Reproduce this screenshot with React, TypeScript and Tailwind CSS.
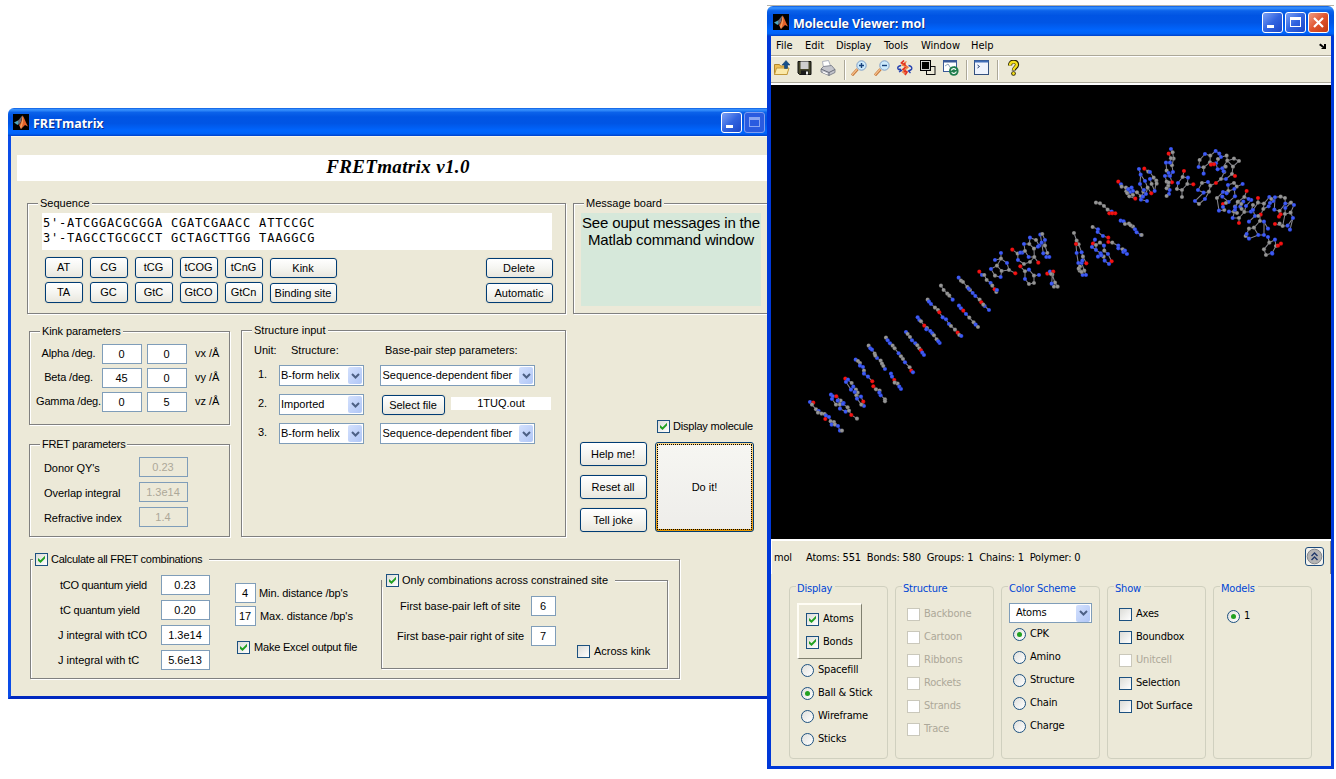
import React, { type ReactNode } from 'react';

type Kids = { children?: ReactNode; className?: string };

/* ---------- small XP widgets ---------- */

function Text({ children, className = '' }: Kids) {
  return <div className={`h-[14px] shrink-0 whitespace-nowrap leading-[14px] ${className}`}>{children}</div>;
}

function Button({ children, className = '' }: Kids) {
  return (
    <button
      className={`flex shrink-0 items-center justify-center whitespace-nowrap rounded-[3px] border border-[#003c74] bg-linear-to-b from-white via-[#f5f5f1] to-[#e9e7de] pr-px shadow-[0_0_0_1px_#e4e0cf] ${className}`}
    >
      {children}
    </button>
  );
}

function Field({ children, className = '' }: Kids) {
  return (
    <div className={`flex h-[20px] shrink-0 items-center justify-center border border-[#7f9db9] pr-px ${className}`}>{children}</div>
  );
}

function Select({ children, className = '' }: Kids) {
  return (
    <div className={`flex shrink-0 items-center justify-between border border-[#7f9db9] bg-white pr-px ${className}`}>
      <span className="whitespace-nowrap">{children}</span>
      <span className="flex h-[17px] w-[14px] items-center justify-center rounded-[2px] bg-linear-to-br from-[#d4e1fd] to-[#b0c6f6]">
        <svg width="9" height="6" viewBox="0 0 9 6">
          <path d="M1 1l3.5 3.5L8 1" fill="none" stroke="#4d6185" strokeWidth="2" />
        </svg>
      </span>
    </div>
  );
}

function Check({ on, off, className = '' }: { on?: boolean; off?: boolean; className?: string }) {
  return (
    <span
      className={`flex h-[13px] w-[13px] shrink-0 items-center justify-center border ${
        off ? 'border-[#cac8bb] bg-white' : 'border-[#1c5180] bg-linear-to-br from-[#dcdcd7] to-white'
      } ${className}`}
    >
      {on && (
        <svg width="9" height="9" viewBox="0 0 9 9">
          <path d="M1 3v2.800l2.500 2.300 4.500-4.500V.8L3.500 5.200z" fill="#21a121" />
        </svg>
      )}
    </span>
  );
}

function Radio({ on }: { on?: boolean }) {
  return (
    <span className="flex h-[13px] w-[13px] shrink-0 items-center justify-center rounded-full border border-[#1c5180] bg-linear-to-br from-[#e0e0dc] to-white">
      {on && <span className="h-[5px] w-[5px] rounded-full bg-[#21a121]" />}
    </span>
  );
}

function Panel({ title, className = '', children }: Kids & { title: ReactNode }) {
  return (
    <section className={`shrink-0 border border-[#808080] shadow-[1px_1px_0_#fff,inset_1px_1px_0_#fff] ${className}`}>
      <div className="-mt-[7px] flex h-[13px] w-fit items-center whitespace-nowrap bg-[#ece9d8] leading-[13px]">{title}</div>
      {children}
    </section>
  );
}

function MatlabLogo() {
  return (
    <svg width="16" height="16" viewBox="0 0 16 16" className="shrink-0">
      <rect width="16" height="16" fill="#000" />
      <path d="M1 8.500l4-2 2 1.500-2.500 3z" fill="#4fa6bd" />
      <path d="M5 6.500C7 5 8 2.500 9.500 1.500L8 8l-2.500 3z" fill="#6b6a78" />
      <path d="M9.500 1.500C11 3 13 9 15 12.500l-3-1.500L8 15 6 11c2-1.500 3-5 3.500-9.500z" fill="#e4622a" />
      <path d="M9.500 1.500c1 3 1 7-1.500 13.500L7 12.500C9 9 9.300 5 9.500 1.500z" fill="#f0a060" />
    </svg>
  );
}

function CaptionButton({ kind, dim }: { kind: 'min' | 'max' | 'close'; dim?: boolean }) {
  const tone =
    kind === 'close'
      ? 'border-white bg-linear-to-br from-[#ee9a80] via-[#e0532c] to-[#c23a10]'
      : dim
        ? 'border-[#7f9df0] bg-[#2a5be0]'
        : 'border-white bg-linear-to-br from-[#7da0f4] via-[#3264e0] to-[#1c46c8]';
  const glyph = dim ? '#8aa6f2' : '#fff';
  return (
    <span className={`h-[21px] w-[21px] shrink-0 rounded-[3px] border ${tone}`}>
      <svg width="19" height="19" viewBox="0 0 19 19">
        {kind === 'min' && <rect x="4" y="12" width="7" height="3" fill="#fff" />}
        {kind === 'max' && (
          <>
            <rect x="4.500" y="4.500" width="10" height="9" fill="none" stroke={glyph} />
            <rect x="4" y="4" width="11" height="3" fill={glyph} />
          </>
        )}
        {kind === 'close' && <path d="M5 5l9 9M14 5l-9 9" stroke="#fff" strokeWidth="2.200" />}
      </svg>
    </span>
  );
}

function TitleBar({ title, className = '', children }: Kids & { title: string }) {
  return (
    <header
      className={`flex shrink-0 rounded-t-[6px] bg-[linear-gradient(#0a5be0_0%,#3a94ff_6%,#0b62ea_16%,#0054e3_32%,#0055e5_55%,#0066ff_82%,#0062f6_92%,#0040c8_100%)] ${className}`}
    >
      <MatlabLogo />
      <h1 className="ml-[4px] mt-px flex-1 whitespace-nowrap font-['Open_Sans',sans-serif] text-[12.500px] font-bold leading-[17px] tracking-[-0.080px] text-white [text-shadow:1px_1px_0_#0a2f8a]">
        {title}
      </h1>
      {children}
    </header>
  );
}

/* ---------- FRETmatrix window ---------- */

const pairButtons = ['AT', 'CG', 'tCG', 'tCOG', 'tCnG', 'TA', 'GC', 'GtC', 'GtCO', 'GtCn'];

function SequencePanel() {
  return (
    <Panel title={<span className="px-[2px]">Sequence</span>} className="h-[111px] w-[539px] pl-[10px]">
      <pre className="mt-[3px] h-[37px] w-[510px] ml-[4px] bg-white pl-px pt-[3px] font-['DejaVu_Sans_Mono',monospace] text-[12px] leading-[15px] tracking-[0.780px]">
        {"5'-ATCGGACGCGGA CGATCGAACC ATTCCGC\n3'-TAGCCTGCGCCT GCTAGCTTGG TAAGGCG"}
      </pre>
      <div className="mt-[7px] ml-[7px] flex">
        <div className="grid grid-cols-[repeat(5,38px)] gap-x-[7px] gap-y-[4px]">
          {pairButtons.map((b) => (
            <Button key={b} className="h-[21px]">{b}</Button>
          ))}
        </div>
        <div className="ml-[7px] mt-px flex flex-col gap-[5px]">
          <Button className="h-[20px] w-[67px]">Kink</Button>
          <Button className="h-[20px] w-[67px]">Binding site</Button>
        </div>
        <div className="ml-[149px] mt-px flex flex-col gap-[5px]">
          <Button className="h-[20px] w-[67px]">Delete</Button>
          <Button className="h-[20px] w-[67px]">Automatic</Button>
        </div>
      </div>
    </Panel>
  );
}

function KinkPanel() {
  const rows = [
    ['Alpha /deg.', '0', '0', 'vx /Å'],
    ['Beta /deg.', '45', '0', 'vy /Å'],
    ['Gamma /deg.', '0', '5', 'vz /Å'],
  ];
  return (
    <Panel title={<span className="px-[2px] tracking-[-0.100px]">Kink parameters</span>} className="h-[94px] w-[201px] pl-[10px]">
      <div className="-ml-[6px] mt-[6px] flex flex-col gap-[4px]">
        {rows.map(([label, a, b, unit]) => (
          <div key={label} className="flex h-[20px]">
            <Text className="mt-[2px] w-[68px] pl-px text-center tracking-[-0.150px]">{label}</Text>
            <Field className="w-[40px] bg-white">{a}</Field>
            <Field className="ml-[5px] w-[40px] bg-white">{b}</Field>
            <Text className="ml-[8px] mt-[2px]">{unit}</Text>
          </div>
        ))}
      </div>
    </Panel>
  );
}

function FretPanel() {
  const rows = [
    ["Donor QY's", '0.23'],
    ['Overlap integral', '1.3e14'],
    ['Refractive index', '1.4'],
  ];
  return (
    <Panel
      title={<span className="px-[2px] tracking-[-0.250px]">FRET parameters</span>}
      className="mt-[19px] h-[93px] w-[201px] pl-[10px]"
    >
      <div className="mt-[6px] flex flex-col gap-[5px]">
        {rows.map(([label, value]) => (
          <div key={label} className="flex h-[20px]">
            <Text className="ml-[4px] mt-[4px] w-[95px] tracking-[-0.080px]">{label}</Text>
            <Field className="w-[49px] text-[#aca899]">{value}</Field>
          </div>
        ))}
      </div>
    </Panel>
  );
}

function StructurePanel() {
  return (
    <Panel title={<span className="px-[2px]">Structure input</span>} className="h-[207px] w-[325px] pl-[10px]">
      <div className="ml-[2px] mt-[6px] flex">
        <Text className="w-[37px]">Unit:</Text>
        <Text className="w-[94px]">Structure:</Text>
        <Text>Base-pair step parameters:</Text>
      </div>
      <div className="ml-[6px] mt-[8px] flex flex-col gap-[8px]">
        <div className="flex h-[21px]">
          <Text className="mt-[2px] w-[21px]">1.</Text>
          <Select className="w-[85px] pl-px">B-form helix</Select>
          <Select className="ml-[16px] w-[155px] pl-[1.500px]">Sequence-dependent fiber</Select>
        </div>
        <div className="flex h-[21px]">
          <Text className="mt-[2px] w-[21px]">2.</Text>
          <Select className="w-[85px] pl-px">Imported</Select>
          <Button className="ml-[18px] mt-px h-[20px] w-[63px]">Select file</Button>
          <div className="ml-[6px] mt-[3px] h-[13px] w-[100px] bg-white text-center leading-[13px]">1TUQ.out</div>
        </div>
        <div className="flex h-[21px]">
          <Text className="mt-[2px] w-[21px]">3.</Text>
          <Select className="w-[85px] pl-px">B-form helix</Select>
          <Select className="ml-[16px] w-[155px] pl-[1.500px]">Sequence-dependent fiber</Select>
        </div>
      </div>
    </Panel>
  );
}

function Actions() {
  return (
    <div className="ml-[14px] mt-[90px] flex flex-col">
      <div className="ml-[77px] flex h-[13px]">
        <Check on />
        <Text className="-mt-px ml-[3px] tracking-[-0.200px]">Display molecule</Text>
      </div>
      <div className="mt-[9px] flex gap-[8px]">
        <div className="flex flex-col gap-[9px]">
          <Button className="h-[24px] w-[67px]">Help me!</Button>
          <Button className="h-[24px] w-[67px]">Reset all</Button>
          <Button className="h-[24px] w-[67px]">Tell joke</Button>
        </div>
        <button className="h-[90px] w-[99px] rounded-[3px] border border-[#003c74] bg-linear-to-b from-[#ffd98a] to-[#e59700] p-px">
          <span className="flex h-full w-full items-center justify-center border border-dotted border-black bg-linear-to-b from-[#f6f6f2] to-[#eeedea] bg-clip-padding">
            Do it!
          </span>
        </button>
      </div>
    </div>
  );
}

function CombinationsPanel() {
  return (
    <Panel
      title={
        <span className="flex items-center pl-[2px] pr-[7px]">
          <Check on />
          <span className="ml-[3px] tracking-[-0.260px]">Calculate all FRET combinations</span>
        </span>
      }
      className="ml-[19px] mt-[22px] h-[120px] w-[650px] pl-[2px]"
    >
      <div className="flex">
        <div className="ml-[25px] mt-[12px] w-[103px]">
          <Text className="ml-[2px] tracking-[-0.250px]">tCO quantum yield</Text>
          <Text className="ml-[2px] mt-[11px] tracking-[-0.180px]">tC quantum yield</Text>
          <Text className="mt-[11px] tracking-[-0.050px]">J integral with tCO</Text>
          <Text className="mt-[11px]">J integral with tC</Text>
        </div>
        <div className="mt-[9px] flex flex-col gap-[5px]">
          {['0.23', '0.20', '1.3e14', '5.6e13'].map((v) => (
            <Field key={v} className="w-[49px] bg-white">{v}</Field>
          ))}
        </div>
        <div className="ml-[25px] mt-[17px] w-[146px]">
          <div className="flex">
            <Field className="w-[21px] bg-white">4</Field>
            <Text className="ml-[3px] mt-[3px] tracking-[-0.100px]">Min. distance /bp's</Text>
          </div>
          <div className="mt-[3px] flex">
            <Field className="w-[21px] bg-white">17</Field>
            <Text className="ml-[4px] mt-[3px] tracking-[-0.050px]">Max. distance /bp's</Text>
          </div>
          <div className="ml-[2px] mt-[15px] flex h-[13px]">
            <Check on />
            <Text className="-mt-px ml-[4px] tracking-[-0.200px]">Make Excel output file</Text>
          </div>
        </div>
        <Panel
          title={
            <span className="flex items-center pl-[4px] pr-[7px]">
              <Check on />
              <span className="ml-[3px]">Only combinations across constrained site</span>
            </span>
          }
          className="mt-[14px] h-[89px] w-[287px]"
        >
          <div className="ml-[14px] mt-[9px] flex">
            <Text className="ml-[4px] mt-[3px] w-[131px]">First base-pair left of site</Text>
            <Field className="w-[25px] bg-white">6</Field>
          </div>
          <div className="ml-[14px] mt-[10px] flex">
            <Text className="ml-px mt-[3px] w-[134px]">First base-pair right of site</Text>
            <Field className="w-[25px] bg-white">7</Field>
          </div>
          <div className="-mt-px ml-[195px] flex h-[13px]">
            <Check />
            <Text className="-mt-px ml-[4px]">Across kink</Text>
          </div>
        </Panel>
      </div>
    </Panel>
  );
}

function FretWindow() {
  return (
    <main className="mt-[108px] flex h-[591px] w-[759px] shrink-0 flex-col overflow-hidden">
      <TitleBar title="FRETmatrix" className="h-[28px] rounded-tr-none pl-[5px] pr-[2px] pt-[6px]">
        <span className="-mt-[2px] flex gap-[2px]">
          <CaptionButton kind="min" />
          <CaptionButton kind="max" dim />
        </span>
      </TitleBar>
      <div className="flex-1 overflow-hidden border-b-[3px] border-l-[3px] border-b-[#0028c0] border-l-[#0a4ce8] bg-[#ece9d8] font-['Liberation_Sans',Arial,sans-serif] text-[11px] text-black shadow-[inset_0_1px_0_#f8f6ea]">
        <h2 className="ml-[6px] mt-[19px] h-[26px] bg-white pl-[12px] text-center font-['Liberation_Serif',serif] text-[19px] font-bold italic leading-[24px] tracking-[0.350px]">
          FRETmatrix v1.0
        </h2>
        <div className="ml-[16px] mt-[22px] flex">
          <SequencePanel />
          <Panel title={<span className="px-[2px]">Message board</span>} className="ml-[7px] h-[111px] w-[260px] pl-[10px]">
            <p className="-ml-[3px] mt-[3px] h-[93px] w-[180px] bg-[#d6e8da] pt-px text-center text-[15px] leading-[17px]">
              <span className="whitespace-nowrap tracking-[-0.150px]">See ouput messages in the</span>
              <br />
              <span className="whitespace-nowrap tracking-[-0.150px]">Matlab command window</span>
            </p>
          </Panel>
        </div>
        <div className="ml-[18px] mt-[16px] flex">
          <div className="mt-px flex flex-col">
            <KinkPanel />
            <FretPanel />
          </div>
          <div className="w-[11px]" />
          <StructurePanel />
          <Actions />
        </div>
        <CombinationsPanel />
      </div>
    </main>
  );
}

/* ---------- Molecule Viewer window ---------- */

const tail = `60,516b 70,518r 66,524g 78,538g 86,543b 84,548g 95,551g 104,552g 108,557b 106,567r;108,557 117,561b 122,574g 132,576g 125,584b 135,584g 144,588b 150,602b 156,602g
;123,494b 129,499b 139,499r 152,512g 161,519b 150,524g 138,524g 126,507b;143,512b 150,524 150,536b 167,545b 177,542g 173,532g 159,522b 143,512;177,542 184,555r 201,566g
;166,446r 174,449b 185,459g 190,470b 183,479b 168,456b;190,470 198,479g 203,488g 199,496g 194,486b;199,496 213,500b 220,515r 222,528b 214,524g 201,506b
;197,389b 204,393g 210,399g 210,407b 219,411b 222,422g 222,431b 234,440b 247,454r;250,469r 258,478g 269,482g 272,496b 285,508g 285,514g;268,488b
;236,347g 241,355b 246,359b 254,371g 261,384b 272,392g 276,401g 285,417b;256,377g;280,408g
;303,431b 306,440b 313,450r 323,461g 333,477b;314,458g;328,470b
;288,323g 293,331b 300,340b 308,347g 314,355g 326,370b 333,379g 339,387g 345,397b 359,412g 364,422r 369,427b
;348,306b 353,312g 360,321g 366,331b 376,340b 382,346g 388,355g 393,361r 397,368b 402,375b
;383,262b 388,270b 393,274g 403,287r 411,294g 421,303b 427,310b 432,316g 440,328g 449,339b;409,298b;445,334b
;413,209g 417,215b 423,222b 435,233g 444,240g 448,247r 458,262b 468,268b 477,282b 483,288g 495,299g 503,308r 508,315g 514,318b
;453,167g 461,180g 472,191g 478,197g 488,209b
;507,227b 513,235b 520,242r 528,252b 538,263g 551,277g 557,284b 564,291g
;506,143b 513,152g 519,156g 532,171g 540,180g 548,189b 556,198b 569,209g 574,217r 584,228b 597,240b;536,176b;580,224g
;568,125r 576,135b 583,135g 590,150g 602,159b 607,167g 614,178r 619,186g;621,180b
;633,69b 633,86g 651,99b 657,120g 676,130r;657,120 635,123g 632,141b 615,137g 603,117b 621,107g 633,86 615,90b;621,107 635,123
;667,59r 683,71g 697,68b 705,63g 702,42b 718,42g 720,23b 738,30g 748,47b 732,56g 718,42;732,56 733,81g 745,98r;733,81 720,96g 702,102g 684,90b 683,71;716,81b 705,63;716,81 733,81;691,68b
;751,14b 757,12g 765,30b 765,47g 755,38b 744,50b;751,14 755,38 760,70b 772,69g 765,47;769,81b 778,81b
;691,109r 705,124g 717,119b 732,137g 747,135b;732,137 732,159g 717,162g 705,147b 705,124
;772,131r 780,125b 790,125r 787,134g 795,158g 803,170g 792,170g 785,161b 787,134;783,132g`;

const head = `102,309g 110,332g 116,343g 125,367b 129,380g 139,400r;108,342r 110,369b 115,399b 120,410g 119,422g 128,435b 138,435b 133,422g 125,399b 129,380;127,392b;125,426g;116,416g
;168,218g 180,220g 192,228g 203,239g 215,245b 226,250r;208,250r 217,250r
;242,272b 251,274b 255,282g 267,281g 279,290g 285,298b 290,307b 303,315b;272,286g;305,315g
;158,291g 174,298b 173,306b 189,318b 205,323r;205,336r 217,338g 235,347b 235,355b 248,358g 250,366b 261,372b;255,362b
;165,329b 159,341r 156,351b 168,360b 182,370b 174,380b;180,338g 192,347b 193,362g 204,372b 215,394r 207,402b 194,392b 191,380g 182,370;180,338 168,345g 168,360;184,376b
;235,155r 243,163b 245,170g 258,173g 275,173b 279,183b 291,187g 303,199g;258,173 259,184g 268,199g 286,206r;270,186b 279,195g;265,178b;262,190g
;297,117b 302,134b 300,162b 310,185g 303,209b 321,213b;313,116r 325,125g 330,126b 341,143g 349,152g 344,183b;330,147b 335,162g 344,183;302,134 315,153b 323,173g 334,190r;323,173 318,192b 309,200b;312,180b;350,161g
;393,57b 398,67g 401,86g 396,106g 390,98b 378,98b 380,122g 390,138b 396,157r;386,71r 393,85g 390,98;396,106 399,126b 390,138 375,138b 380,155g 385,167g 389,180b 387,192b 380,198g;380,175g;386,158g;386,129b
;432,123r 428,141g 444,143b 442,162g 460,163r;442,162 426,180g 426,201g;426,180 411,177g 414,159b 428,141
;495,72b 511,77g 510,97g 491,112g 476,111b 479,90g 495,72;491,112 491,131b;511,77 527,63b 538,71b 543,81b 528,100b 513,104r;510,97 528,100
;543,81 560,77g 562,92g 547,115b 533,118b 528,100;582,86g 562,92;582,86 597,93g 579,110g 562,92;579,110 576,132g 585,138r;576,132 558,147b 543,147g 528,159r;547,115 553,126g 543,147;551,124b;522,103r;534,87g;557,110g
;486,159g 504,156b 511,167g 528,159;511,167 507,185g 491,188b 474,180b 486,159;507,185 495,207b 477,222g 465,213b 491,188
;608,162b 590,170g 582,159g 564,165b 565,183g 549,186b 531,204g 537,242b 553,240g 549,222r 566,216b 585,199b 583,177b 590,170;565,183 583,177;567,245b 582,245g 585,230g 595,215g;547,200b 566,216;560,190b;549,231b;558,219g
;620,183r 613,201g 593,216g 585,240b 578,264b 597,264g 597,279r;597,264 613,246g 618,228b 634,210b 613,201;601,230b 613,246 633,245b 639,225g;626,207b;605,237g;610,215b;591,249g;604,222g;586,232b
;654,204r 654,218g 672,221g 688,201b 700,213b 686,229b 670,237g 662,254r 645,258b 639,240b 654,218;672,221 670,237;660,273g 642,293g;627,275b 645,258;690,219b;655,258g
;660,254 660,273 672,275b 684,296b;672,275 672,315b 655,315b 642,293;642,293 627,296g 617,318g 627,326b 655,315;620,312b
;705,202b 722,200g 735,204g 736,221b 719,243g 703,239b 705,202;719,243 717,260r;736,221 753,218g 762,225b 752,248g 735,252g 736,234b 753,218;752,248 759,264b 750,299b;735,252 728,288g 705,282r;728,288 743,287b 759,264;722,253r;694,207g;719,281g
;684,321b 688,338g 705,329b 708,348g 723,341r;708,348 696,369b 678,375g 672,358g 688,338;714,347r;697,371b`;

type Atom = { x: number; y: number; c?: string };

const parse = (src: string): Atom[][] =>
  src.split(';').map((chain) =>
    chain.trim().split(/\s+/).map((tok) => {
      const m = /^(\d+),(\d+)([bgr]?)$/.exec(tok)!;
      return { x: +m[1], y: +m[2], c: m[3] };
    }),
  );

function MoleculePart({ src, transform }: { src: string; transform: string }) {
  const chains = parse(src);
  return (
    <g transform={transform}>
      {chains.map((c, i) => (
        <polyline key={i} points={c.map((a) => `${a.x},${a.y}`).join(' ')} fill="none" stroke="#84848c" strokeWidth="3.200" />
      ))}
      {chains.flat().filter((a) => a.c).map((a, i) => (
        <circle key={i} cx={a.x} cy={a.y} r="6.300" fill={`url(#atom-${a.c})`} />
      ))}
    </g>
  );
}

function Molecule() {
  return (
    <svg width="560" height="454" viewBox="771 85 560 454" className="block shrink-0 bg-black">
      <defs>
        {[
          ['b', '#3f5cf4', '#1c32b8'],
          ['g', '#969696', '#5c5c5c'],
          ['r', '#f41414', '#b00000'],
        ].map(([id, a, b]) => (
          <radialGradient key={id} id={`atom-${id}`} cx="0.45" cy="0.45" r="0.6">
            <stop offset="0.4" stopColor={a} />
            <stop offset="1" stopColor={b} />
          </radialGradient>
        ))}
      </defs>
      <MoleculePart src={tail} transform="translate(790 230) scale(.33333)" />
      <MoleculePart src={head} transform="translate(1040 130) scale(.33333)" />
    </svg>
  );
}

function Tool({ children, className = '' }: Kids) {
  return (
    <svg width="16" height="16" viewBox="0 0 16 16" className={`shrink-0 ${className}`}>
      {children}
    </svg>
  );
}

function Magnifier({ plus }: { plus?: boolean }) {
  return (
    <>
      <path d="M1 15.300L6.500 9.300" stroke="#c8793a" strokeWidth="2.800" />
      <path d="M1 14.800L6 9.300" stroke="#f8c490" strokeWidth="1.200" />
      <circle cx="10.500" cy="5.500" r="4.700" fill="#cdeafb" stroke="#7f9fc8" />
      <path d={plus ? 'M8 5.500h5M10.500 3v5' : 'M8 5.500h5'} stroke="#16417c" strokeWidth="1.400" />
    </>
  );
}

function Separator() {
  return <span className="mt-[4px] h-[20px] w-[2px] border-l border-r border-l-[#aca899] border-r-white" />;
}

function Toolbar() {
  return (
    <div className="flex h-[26px] shrink-0 items-center border-b border-[#aca899] bg-[#ece9d8] pb-[4px] pl-[3px]">
      <Tool className="mr-[7px]">
        <path d="M.5 14.500V4.500h5l1 1.500h6.500v8.500z" fill="#eebf55" stroke="#b4862a" />
        <path d="M.5 14.500l2-6.500h12.500l-2 6.500z" fill="#fbe9a8" stroke="#c39a3c" />
        <path d="M10.500 8.500V5H8L12 .5 16 5h-2.500v3.500z" fill="#15508c" stroke="#0c3460" strokeWidth=".5" />
      </Tool>
      <Tool className="mr-[7px]">
        <path d="M1 1.500h13v13H2.500L1 13z" fill="#45452a" stroke="#111" />
        <rect x="3.500" y="1.500" width="8" height="7.500" fill="#cfcfcf" />
        <rect x="4" y="10.500" width="7.500" height="4" fill="#1a1a1a" />
        <rect x="9" y="11.500" width="2" height="3" fill="#eee" />
      </Tool>
      <Tool className="mr-[8px]">
        <path d="M3.500 7.500L2.500 1.500 8.500.5l2.500 6.500z" fill="#fff" stroke="#9aa0b0" strokeWidth=".8" />
        <path d="M1 9l2.500-2.500 8-1 3.500 4v3L9 15.500 1 12z" fill="#c4c5cc" stroke="#6e7280" strokeWidth=".8" />
        <path d="M1 9l8 3.500 6-3M9 12.500v3" fill="none" stroke="#5f6270" strokeWidth=".9" />
        <path d="M3 12l4.500 2" stroke="#fff" strokeWidth="1.200" />
      </Tool>
      <Separator />
      <Tool className="ml-[5px] mr-[7px]"><Magnifier plus /></Tool>
      <Tool className="mr-[7px]"><Magnifier /></Tool>
      <Tool className="mr-[7px]">
        <path d="M7 .5L4.500 3l5 3.500-3.500 3 4 2.500-2 3" fill="none" stroke="#e23222" strokeWidth="1.700" />
        <path d="M9.500 1.500L5 5l6 2.500-5.500 4.500L8 14" fill="none" stroke="#f0803c" strokeWidth="1.100" />
        <path d="M4 5.500C-.5 6.500-.3 9.500 4 10.500M11.500 5.500c4.500 1 4.300 4.500.3 5.500M2.500 8.500l2 2-2.500 1.500M13.500 13l-2-2L14 9.500" fill="none" stroke="#2440b0" strokeWidth="1.300" />
        <circle cx="7.500" cy="4" r="1.300" fill="#e23222" />
        <circle cx="8" cy="11.500" r="1.300" fill="#e23222" />
      </Tool>
      <Tool className="mr-[7px]">
        <rect x="6.500" y="6.500" width="8.500" height="8" fill="#ece9d8" stroke="#111" />
        <rect x="0" y="0" width="11" height="11" fill="#000" />
        <rect x="1.500" y="1.500" width="8" height="8" fill="#000" stroke="#fff" strokeWidth=".8" />
      </Tool>
      <Tool className="mr-[7px]">
        <rect x=".5" y=".5" width="13" height="11" fill="#fff" stroke="#3a5a98" />
        <rect x=".5" y="0" width="13" height="2.500" fill="#3a5a98" />
        <path d="M2 6l3-2 4 6 3-4" stroke="#8fa4b8" fill="none" />
        <circle cx="10.800" cy="11" r="4.800" fill="#1f7d4c" />
        <path d="M8.300 10.500c.5-2.500 4-2.500 4.500-.6M13.300 11.500c-.5 2.500-4 2.500-4.500.6" fill="none" stroke="#fff" strokeWidth="1.200" />
      </Tool>
      <Separator />
      <Tool className="ml-[6px] mr-[7px]">
        <rect x=".5" y=".5" width="14" height="14" fill="#eef3fd" stroke="#33507f" />
        <rect x=".5" y=".5" width="14" height="2" fill="#3f6db8" />
        <path d="M3.500 5L5.500 6.500l-2 1.500" stroke="#24406e" fill="none" />
      </Tool>
      <Separator />
      <Tool className="ml-[6px]">
        <path d="M5 5.500C5 0 12.500.5 12 5c-.3 2.500-3.200 2.600-3.200 5.500" fill="none" stroke="#2b2600" strokeWidth="4.200" />
        <circle cx="8.500" cy="13.500" r="2.300" fill="#2b2600" />
        <path d="M5 5.500C5 .8 12.200.9 11.800 5c-.3 2.300-3.200 2.600-3.200 5" fill="none" stroke="#f6e01c" strokeWidth="2.400" />
        <circle cx="8.500" cy="13.500" r="1.400" fill="#f6e01c" />
      </Tool>
    </div>
  );
}

function Group({ title, children }: Kids & { title: string }) {
  return (
    <section className="h-[173px] w-[99px] shrink-0 rounded-[4px] border border-[#d0d0bf]">
      <h3 className="-mt-[6px] ml-[6px] h-[14px] w-fit whitespace-nowrap bg-[#ece9d8] pl-px pr-[3px] pt-px leading-[14px] text-[#0046d5]">
        {title}
      </h3>
      {children}
    </section>
  );
}

function Option({ kind, label, on, off }: { kind: 'check' | 'radio'; label: string; on?: boolean; off?: boolean }) {
  return (
    <div className={`flex h-[23px] items-center ${off ? 'text-[#aca899]' : ''}`}>
      {kind === 'check' ? <Check on={on} off={off} /> : <Radio on={on} />}
      <span className="ml-[4px] whitespace-nowrap">{label}</span>
    </div>
  );
}

function ViewerPanel() {
  return (
    <div className="flex flex-1 flex-col border-t-2 border-t-white bg-[#ece9d8] tracking-[-0.180px]">
      <div className="flex h-[33px] items-center border-l border-r border-l-white border-r-[#8a887a] pr-[6px]">
        <span className="ml-[2px] mt-px w-[32px]">mol</span>
        <span className="mt-px flex-1 whitespace-pre">Atoms: 551  Bonds: 580  Groups: 1  Chains: 1  Polymer: 0</span>
        <span className="-mt-[2px] flex h-[19px] w-[19px] items-center justify-center rounded-[3px] border border-[#1b4a7c] bg-[#f4f3ee]">
          <svg width="17" height="17" viewBox="0 0 17 17">
            <circle cx="8.500" cy="8.500" r="7.300" fill="#b4b4b4" stroke="#85878c" />
            <path d="M5.500 8l3-3 3 3M5.500 12l3-3 3 3" fill="none" stroke="#20386a" strokeWidth="1.400" />
          </svg>
        </span>
      </div>
      <div className="ml-[18px] mt-[12px] flex gap-[7px]">
        <Group title="Display">
          <div className="ml-[7px] mt-[8px] flex h-[56px] w-[65px] flex-col border-2 border-b border-r border-[#fffdf5] border-b-[#808070] border-r-[#808070] pl-[7px] pt-[3px]">
            <Option kind="check" label="Atoms" on />
            <Option kind="check" label="Bonds" on />
          </div>
          <div className="ml-[11px]">
            <Option kind="radio" label="Spacefill" />
            <Option kind="radio" label="Ball & Stick" on />
            <Option kind="radio" label="Wireframe" />
            <Option kind="radio" label="Sticks" />
          </div>
        </Group>
        <Group title="Structure">
          <div className="ml-[11px] mt-[8px]">
            {['Backbone', 'Cartoon', 'Ribbons', 'Rockets', 'Strands', 'Trace'].map((l) => (
              <Option key={l} kind="check" label={l} off />
            ))}
          </div>
        </Group>
        <Group title="Color Scheme">
          <Select className="ml-[7px] mt-[8px] h-[20px] w-[83px] pl-[6px]">Atoms</Select>
          <div className="ml-[11px]">
            {['CPK', 'Amino', 'Structure', 'Chain', 'Charge'].map((l) => (
              <Option key={l} kind="radio" label={l} on={l === 'CPK'} />
            ))}
          </div>
        </Group>
        <Group title="Show">
          <div className="ml-[11px] mt-[8px]">
            {['Axes', 'Boundbox', 'Unitcell', 'Selection', 'Dot Surface'].map((l) => (
              <Option key={l} kind="check" label={l} off={l === 'Unitcell'} />
            ))}
          </div>
        </Group>
        <Group title="Models">
          <div className="ml-[13px] mt-[10px]">
            <Option kind="radio" label="1" on />
          </div>
        </Group>
      </div>
    </div>
  );
}

function ViewerWindow() {
  return (
    <aside className="mt-[5px] flex h-[764px] w-[567px] shrink-0 flex-col border-t border-t-[#b4b2a8] font-['DejaVu_Sans_Condensed','DejaVu_Sans',sans-serif] text-[11px] text-black">
      <TitleBar title="Molecule Viewer: mol" className="h-[30px] pl-[6px] pr-[5px] pt-[8px]">
        <span className="-mt-[2px] flex gap-[2px]">
          <CaptionButton kind="min" />
          <CaptionButton kind="max" />
          <CaptionButton kind="close" />
        </span>
      </TitleBar>
      <div className="flex flex-1 flex-col border-[3px] border-l-4 border-t-0 border-[#0038d8]">
        <nav className="flex h-[20px] shrink-0 items-center border-b border-[#aca899] bg-[#ece9d8] pl-[5px] pt-[2px]">
          <span className="w-[29px]">File</span>
          <span className="w-[31px]">Edit</span>
          <span className="w-[48px] tracking-[-0.200px]">Display</span>
          <span className="w-[37px]">Tools</span>
          <span className="w-[50px]">Window</span>
          <span className="flex-1">Help</span>
          <svg width="8" height="7" viewBox="0 0 8 7" className="mr-[4px]">
            <path d="M0 2l1.500-1.500L5 3.500V1h2v5H2.500V5H4z" fill="#000" />
          </svg>
        </nav>
        <div className="h-px shrink-0 bg-white" />
        <Toolbar />
        <div className="h-[2px] shrink-0 bg-white" />
        <Molecule />
        <ViewerPanel />
      </div>
    </aside>
  );
}

export default function App() {
  return (
    <div className="flex h-[779px] w-[1336px] items-start overflow-hidden bg-white pl-[8px]">
      <FretWindow />
      <ViewerWindow />
    </div>
  );
}
